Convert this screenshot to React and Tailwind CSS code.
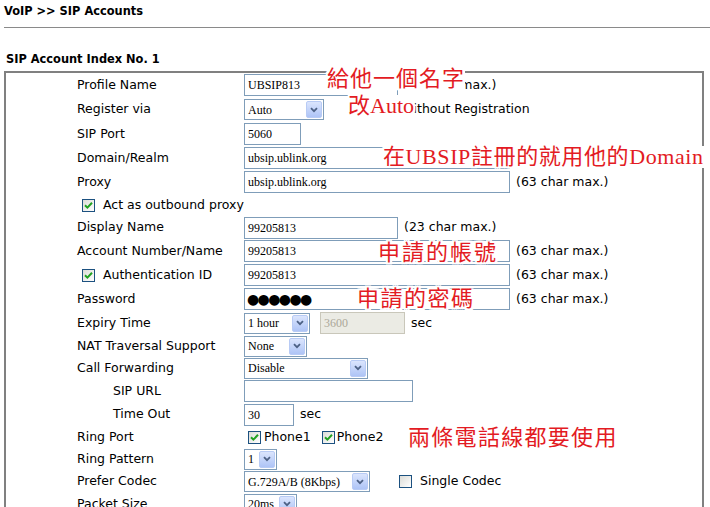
import React from 'react';

// XP-era router form: labels on the left, controls from x=244
const Check = ({ checked }) => (
  <span className="w-[13px] h-[13px] shrink-0 border border-[#1c5180] bg-linear-to-br from-[#dcdcd7] to-white flex items-center justify-center">
    {checked && (
      <svg width="9" height="9" viewBox="0 0 9 9">
        <path d="M1 4.2 L3.4 6.6 L8 1.8" stroke="#21a121" strokeWidth="2" fill="none" />
      </svg>
    )}
  </span>
);

const Field = ({ w, value, disabled }) => (
  <div
    className={`${w} h-[22px] shrink-0 border flex items-center px-[3px] text-[12px] font-['Liberation_Serif',serif] ${
      disabled ? 'bg-[#ebebe4] border-[#c9c7ba] text-[#aca899]' : 'bg-white border-[#7f9db9] text-black'
    }`}
  >
    {value}
  </div>
);

const Select = ({ w, value }) => (
  <div className={`${w} h-[21px] shrink-0 border border-[#7f9db9] bg-white flex items-center justify-between pl-[3px] pr-[1px] text-[12px] font-['Liberation_Serif',serif]`}>
    <span className="whitespace-nowrap">{value}</span>
    <span className="w-[16px] h-[17px] rounded-[2px] border border-[#b8cbf5] bg-linear-to-b from-[#dbe5fd] to-[#aec4f6] flex items-center justify-center">
      <svg width="8" height="6" viewBox="0 0 8 6">
        <path d="M1 1.2 L4 4.2 L7 1.2" stroke="#4d6185" strokeWidth="1.8" fill="none" />
      </svg>
    </span>
  </div>
);

const Max = ({ children }) => <span className="ml-[6px] whitespace-nowrap">{children}</span>;

const Row = ({ h, label, pad = 'pl-[71px]', box, children }) => (
  <div className={`${h} flex items-center`}>
    <div className={`w-[238px] shrink-0 flex items-center ${pad}`}>
      {box !== undefined && (
        <span className="mr-[8px]">
          <Check checked={box} />
        </span>
      )}
      <span className="whitespace-nowrap">{label}</span>
    </div>
    <div className="flex items-center">{children}</div>
  </div>
);

const Note = ({ pos, bg, children }) => (
  <span
    className={`absolute ${pos} whitespace-nowrap text-[22px] leading-[22px] text-[#e31b23] font-['Liberation_Serif','Noto_Sans_CJK_TC',serif] ${
      bg ? 'bg-white' : ''
    } [text-shadow:-2px_0_0_#fff,2px_0_0_#fff,0_-2px_0_#fff,0_2px_0_#fff,-2px_-2px_0_#fff,2px_2px_0_#fff,-2px_2px_0_#fff,2px_-2px_0_#fff]`}
  >
    {children}
  </span>
);

export default function App() {
  return (
    <div className="w-[710px] h-[507px] overflow-hidden bg-white text-black font-['DejaVu_Sans',sans-serif] text-[12.5px]">
      <div className="h-[24px] flex items-center pl-[4px] text-[11.4px] font-bold">VoIP &gt;&gt; SIP Accounts</div>
      <div className="mt-[3px] ml-[4px] border-t border-[#8a8a8a]" />
      <div className="mt-[24px] h-[16px] flex items-center pl-[6px] text-[11.4px] font-bold">SIP Account Index No. 1</div>

      <div className="relative mt-[3px] ml-[4px] w-[700px] border-2 border-[#808080] pb-[20px]">
        <Row h="h-[24px]" label="Profile Name">
          <Field w="w-[154px]" value="UBSIP813" />
          <Max>(11 char max.)</Max>
        </Row>
        <Row h="h-[25px]" label="Register via">
          <Select w="w-[80px]" value="Auto" />
          <span className="ml-[32px]"><Check checked={false} /></span>
          <span className="ml-[7px] whitespace-nowrap">Call without Registration</span>
        </Row>
        <Row h="h-[24px]" label="SIP Port">
          <Field w="w-[57px]" value="5060" />
        </Row>
        <Row h="h-[24px]" label="Domain/Realm">
          <Field w="w-[266px]" value="ubsip.ublink.org" />
          <Max>(63 char max.)</Max>
        </Row>
        <Row h="h-[24px]" label="Proxy">
          <Field w="w-[266px]" value="ubsip.ublink.org" />
          <Max>(63 char max.)</Max>
        </Row>
        <Row h="h-[22px]" label="Act as outbound proxy" pad="pl-[76px]" box={true} />
        <Row h="h-[23px]" label="Display Name">
          <Field w="w-[154px]" value="99205813" />
          <Max>(23 char max.)</Max>
        </Row>
        <Row h="h-[24px]" label="Account Number/Name">
          <Field w="w-[266px]" value="99205813" />
          <Max>(63 char max.)</Max>
        </Row>
        <Row h="h-[24px]" label="Authentication ID" pad="pl-[76px]" box={true}>
          <Field w="w-[266px]" value="99205813" />
          <Max>(63 char max.)</Max>
        </Row>
        <Row h="h-[24px]" label="Password">
          <div className="w-[266px] h-[22px] border border-[#7f9db9] bg-white flex items-center px-[2px] text-[14px] leading-none font-['DejaVu_Sans',sans-serif] tracking-[-1.6px]">
            ●●●●●●
          </div>
          <Max>(63 char max.)</Max>
        </Row>
        <Row h="h-[24px]" label="Expiry Time">
          <Select w="w-[66px]" value="1 hour" />
          <span className="ml-[10px]">
            <Field w="w-[85px]" value="3600" disabled />
          </span>
          <span className="ml-[6px]">sec</span>
        </Row>
        <Row h="h-[22px]" label="NAT Traversal Support">
          <Select w="w-[63px]" value="None" />
        </Row>
        <Row h="h-[22px]" label="Call Forwarding">
          <Select w="w-[124px]" value="Disable" />
        </Row>
        <Row h="h-[24px]" label="SIP URL" pad="pl-[107px]">
          <Field w="w-[169px]" value="" />
        </Row>
        <Row h="h-[23px]" label="Time Out" pad="pl-[107px]">
          <Field w="w-[50px]" value="30" />
          <span className="ml-[6px]">sec</span>
        </Row>
        <Row h="h-[22px]" label="Ring Port">
          <span className="ml-[4px]"><Check checked /></span>
          <span className="ml-[3px]">Phone1</span>
          <span className="ml-[11px]"><Check checked /></span>
          <span className="ml-[2px]">Phone2</span>
        </Row>
        <Row h="h-[22px]" label="Ring Pattern">
          <Select w="w-[33px]" value="1" />
        </Row>
        <Row h="h-[23px]" label="Prefer Codec">
          <Select w="w-[126px]" value="G.729A/B (8Kbps)" />
          <span className="ml-[29px]"><Check checked={false} /></span>
          <span className="ml-[8px] whitespace-nowrap">Single Codec</span>
        </Row>
        <Row h="h-[22px]" label="Packet Size">
          <Select w="w-[53px]" value="20ms" />
        </Row>

        <Note pos="left-[321px] top-[-5px] tracking-[1px]" bg>給他一個名字</Note>
        <Note pos="left-[342px] top-[22px]" bg>改Auto</Note>
        <Note pos="left-[377px] top-[73px] tracking-[0.6px]" bg>在UBSIP註冊的就用他的Domain</Note>
        <Note pos="left-[372px] top-[169px] tracking-[2px]">申請的帳號</Note>
        <Note pos="left-[351px] top-[215px] tracking-[1.5px]">申請的密碼</Note>
        <Note pos="left-[402px] top-[354px] tracking-[1.3px]">兩條電話線都要使用</Note>
      </div>
    </div>
  );
}
